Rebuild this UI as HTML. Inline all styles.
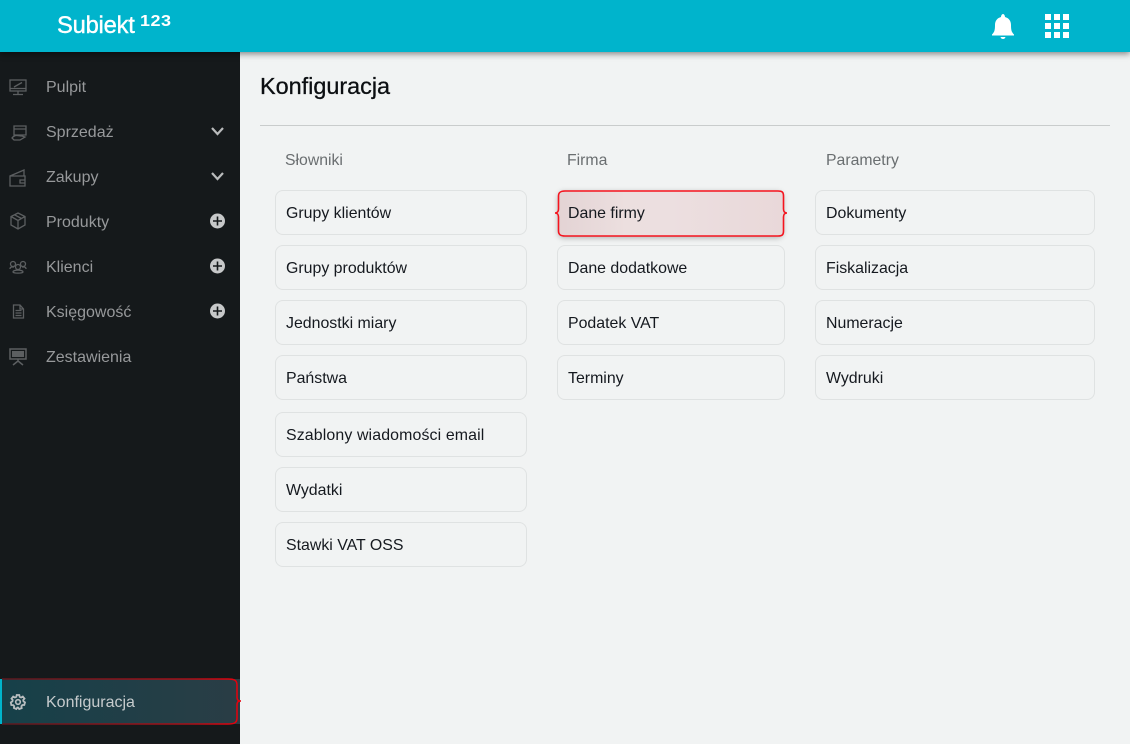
<!DOCTYPE html>
<html><head><meta charset="utf-8"><style>
html,body{margin:0;padding:0;width:1130px;height:744px;overflow:hidden;background:#f1f3f3;font-family:"Liberation Sans",sans-serif}
.a{position:absolute}
#top{left:0;top:0;width:1130px;height:52px;background:#00b4cc;box-shadow:0 2px 6px rgba(0,0,0,.45);z-index:5}
#side{left:0;top:52px;width:240px;height:692px;background:#15191b;z-index:3}
.n{position:absolute;left:46px;font-size:16px;line-height:20px;color:#97999b;white-space:nowrap;z-index:4;margin-top:1px}
.b{position:absolute;box-sizing:border-box;height:45px;border:1px solid #dfe2e2;border-radius:8px;font-size:15.9px;line-height:46px;padding-left:10px;color:#15191f;white-space:nowrap}
.h{position:absolute;font-size:15.8px;line-height:18px;color:#6a6e70;white-space:nowrap}
svg{position:absolute;overflow:visible}
</style></head><body>
<div id="top" class="a">
<div class="a" style="left:57px;top:13px;font-size:23.700px;line-height:26px;color:#fff;letter-spacing:-.2px;-webkit-text-stroke:.4px #fff">Subiekt</div>
<div class="a" style="left:140px;top:13px;font-size:18px;line-height:18px;color:#fff;font-weight:700;letter-spacing:.5px;transform-origin:0 0;transform:scale(1,.85)">123</div>
<svg style="left:990px;top:13px" width="26" height="26" viewBox="0 0 26 26"><path fill="#fff" d="M2 21.500C4.500 19 5 17 5 12C5 7.500 7.500 5 11 4C11 2.500 12 1 13 1C14 1 15 2.500 15 4C18.500 5 21 7.500 21 12C21 17 21.500 19 24 21.500V22.500H2ZM10.500 24H15.500C15 25.500 14 26 13 26C12 26 11 25.500 10.500 24Z"/></svg>
<svg style="left:1045px;top:14px" width="24" height="24" viewBox="0 0 24 24" fill="#fff"><rect x="0" y="0" width="6" height="6"/><rect x="9" y="0" width="6" height="6"/><rect x="18" y="0" width="6" height="6"/><rect x="0" y="9" width="6" height="6"/><rect x="9" y="9" width="6" height="6"/><rect x="18" y="9" width="6" height="6"/><rect x="0" y="18" width="6" height="6"/><rect x="9" y="18" width="6" height="6"/><rect x="18" y="18" width="6" height="6"/></svg>
</div>
<div id="side" class="a"></div>

<div class="n" style="top:77px">Pulpit</div>
<div class="n" style="top:122px">Sprzedaż</div>
<div class="n" style="top:167px">Zakupy</div>
<div class="n" style="top:212px">Produkty</div>
<div class="n" style="top:257px">Klienci</div>
<div class="n" style="top:302px">Księgowość</div>
<div class="n" style="top:347px">Zestawienia</div>

<svg style="left:0;top:0;z-index:4" width="240" height="744" fill="none" stroke="#5c5f61" stroke-width="1.300">
<rect x="10" y="80" width="16" height="11"/><path d="M10 88.500H26M14 87L22 82.500M18 91V94M13 94.500H23"/>
<path d="M14 126H26V135H14ZM14 129H26M12 138C15 134 18 136 22 136L25 137L20 140H14Z"/>
<path d="M10 176H25V186H10ZM10 176L24 170V176M20 180H25V183H20Z"/>
<path d="M18 213L25 216.500V225L18 229L11 225V216.500ZM11 216.500L18 220.500L25 216.500M18 220.500V229M14.500 214.800L21.500 218.500"/>
<circle cx="13" cy="264" r="2.500"/><circle cx="23" cy="264" r="2.500"/><circle cx="18" cy="267" r="2.500"/><path d="M10 269C10 266.500 12 267 14 267M26 269C26 266.500 24 267 22 267M13 272C13 269.500 23 269.500 23 272C23 273.500 13 273.500 13 272Z"/>
<path d="M13.500 305H20L23.500 309V318H13.500ZM20 305V309H23.500M15.500 310.500H21.500M15.500 313H21.500M15.500 315.500H21.500"/>
<path d="M10 349H26V359H10ZM18 359V362M13 365L18 361L23 365" stroke-width="1.500"/><path d="M12 351H24V357H12Z" fill="#5c5f61" stroke="none"/>
<path d="M212 128L217.500 134L223 128" stroke="#b9bbbc" stroke-width="2.200"/>
<path d="M212 173L217.500 179L223 173" stroke="#b9bbbc" stroke-width="2.200"/>
<circle cx="217.500" cy="221" r="7.500" fill="#c6c8c9" stroke="none"/><path d="M213 221H222M217.500 216.500V225.500" stroke="#15191b" stroke-width="1.600"/>
<circle cx="217.500" cy="266" r="7.500" fill="#c6c8c9" stroke="none"/><path d="M213 266H222M217.500 261.500V270.500" stroke="#15191b" stroke-width="1.600"/>
<circle cx="217.500" cy="311" r="7.500" fill="#c6c8c9" stroke="none"/><path d="M213 311H222M217.500 306.500V315.500" stroke="#15191b" stroke-width="1.600"/>
</svg>

<div class="a" style="left:0;top:679px;width:240px;height:45px;background:linear-gradient(90deg,#164049,#2a3d45);z-index:4"></div>
<div class="a" style="left:0;top:679px;width:2px;height:45px;background:#00b4cc;z-index:5"></div>
<svg style="left:0;top:664px;z-index:5" width="250" height="70" fill="none"><defs><linearGradient id="g" gradientUnits="userSpaceOnUse" x1="0" y1="0" x2="237" y2="0"><stop offset="0" stop-color="#5a1a20"/><stop offset=".8" stop-color="#a81018"/><stop offset="1" stop-color="#e8000c"/></linearGradient></defs><path d="M2 15H228C234 15 237 16 237 21V33C237 36 238 37 241 37C238 37 237 38 237 41V54C237 59 234 60 228 60H2" stroke="url(#g)" stroke-width="1.500"/></svg>
<svg style="left:10px;top:694px;z-index:5" width="16" height="16" viewBox="0 0 16 16" fill="none" stroke="#b9bec0"><circle cx="8" cy="8" r="2.300" stroke-width="1.600"/><path stroke-width="1.800" d="M6.700 1H9.300L9.700 2.900L11.100 3.500L12.800 2.500L14.500 4.600L13.200 6L13.500 7.300L15 8.400L14.300 11L12.400 11L11.400 12.200L11.700 14.100L9.200 15L8 13.500H7.400L6.300 15L3.900 14L4.200 12.200L3.200 11.100L1.300 11L.8 8.400L2.400 7.400L2.700 6L1.500 4.600L3.200 2.500L4.900 3.500L6.300 2.900Z"/></svg>
<div class="n" style="top:692px;color:#c6cbcd;z-index:6">Konfiguracja</div>

<div class="a" style="left:260px;top:72px;font-size:23.400px;line-height:28px;color:#0c0f12;-webkit-text-stroke:.3px #0c0f12">Konfiguracja</div>
<div class="a" style="left:260px;top:125px;width:850px;height:1px;background:#c9cccc"></div>

<div class="h" style="left:285px;top:152px">Słowniki</div>
<div class="h" style="left:567px;top:152px">Firma</div>
<div class="h" style="left:826px;top:152px">Parametry</div>

<div class="b" style="left:275px;top:190px;width:252px">Grupy klientów</div>
<div class="b" style="left:275px;top:245px;width:252px">Grupy produktów</div>
<div class="b" style="left:275px;top:300px;width:252px">Jednostki miary</div>
<div class="b" style="left:275px;top:355px;width:252px">Państwa</div>
<div class="b" style="left:275px;top:412px;width:252px;letter-spacing:.13px">Szablony wiadomości email</div>
<div class="b" style="left:275px;top:467px;width:252px">Wydatki</div>
<div class="b" style="left:275px;top:522px;width:252px">Stawki VAT OSS</div>

<div class="b" style="left:558px;top:190px;width:225px;height:46px;background:linear-gradient(90deg,#e3d3d4,#ecdfdf 30%,#ecdfe0 50%,#e9d8d9 100%);border:0;box-shadow:0 2px 6px rgba(0,0,0,.28);line-height:47px;border-radius:6px">Dane firmy</div>
<svg style="left:550px;top:186px" width="240" height="54" fill="none"><path d="M15 5H228C232 5 233.500 6 233.500 10V23C233.500 25 234.500 27 237 27C234.500 27 233.500 29 233.500 31V45C233.500 49 232 50 228 50H15C11 50 8.500 49 8.500 45V31C8.500 29 7.500 27 5 27C7.500 27 8.500 25 8.500 23V10C8.500 6 11 5 15 5Z" stroke="#f5141e" stroke-width="1.600"/></svg>
<div class="b" style="left:557px;top:245px;width:228px">Dane dodatkowe</div>
<div class="b" style="left:557px;top:300px;width:228px">Podatek VAT</div>
<div class="b" style="left:557px;top:355px;width:228px">Terminy</div>

<div class="b" style="left:815px;top:190px;width:280px">Dokumenty</div>
<div class="b" style="left:815px;top:245px;width:280px">Fiskalizacja</div>
<div class="b" style="left:815px;top:300px;width:280px">Numeracje</div>
<div class="b" style="left:815px;top:355px;width:280px">Wydruki</div>
</body></html>
